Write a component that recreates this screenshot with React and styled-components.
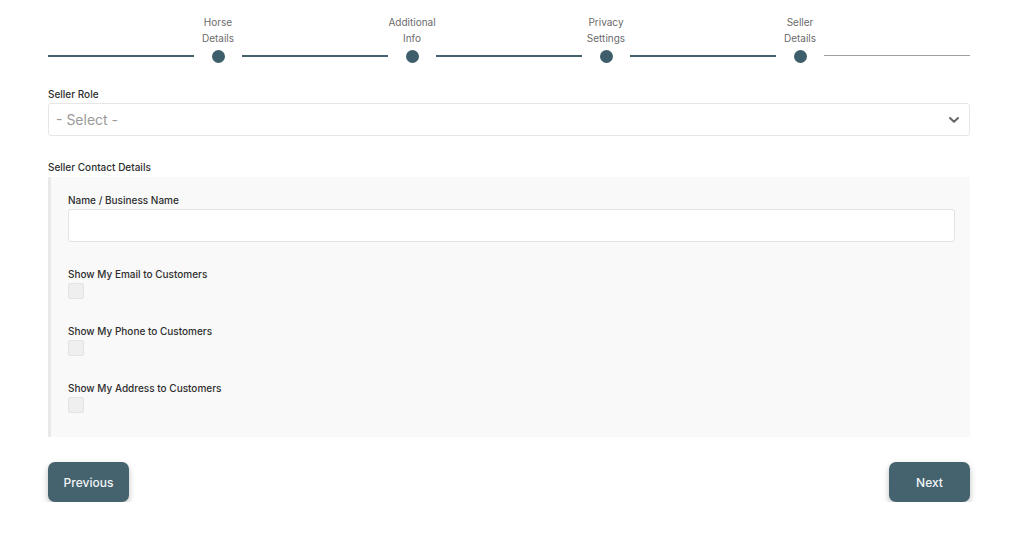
import React from "react";
import styled, { createGlobalStyle } from "styled-components";

const Global = createGlobalStyle`
  html, body { margin: 0; padding: 0; background: #fff; }
  body { font-family: Inter, "Noto Sans", "Liberation Sans", sans-serif; color: #333; }
  * { box-sizing: border-box; }
`;

const Page = styled.div`
  width: 922px;
  margin-left: 48px;
  display: flex;
  flex-direction: column;
`;

const Stepper = styled.div`
  display: flex;
  align-items: flex-end;
  height: 63px;
`;

const Step = styled.div`
  display: flex;
  align-items: flex-end;
  width: 194px;
`;

const Line = styled.div`
  flex: 1;
  height: ${(p) => (p.$done ? 2 : 1)}px;
  background: ${(p) => (p.$done ? "#46626e" : "#9aa0a3")};
  margin-bottom: ${(p) => (p.$done ? 6 : 7)}px;
`;

const DotCol = styled.div`
  width: 48px;
  display: flex;
  flex-direction: column;
  align-items: center;
`;

const StepLabel = styled.div`
  font-size: 10px;
  line-height: 16px;
  color: #6b6b6b;
  text-align: center;
  white-space: nowrap;
  margin-bottom: 4px;
`;

const Dot = styled.div`
  width: 13px;
  height: 13px;
  border-radius: 50%;
  background: #3d5e6a;
`;

const Tail = styled.div`
  flex: 1;
  display: flex;
  align-items: flex-end;
`;

const FieldLabel = styled.div`
  font-size: 10px;
  font-weight: 500;
  color: #2e2e2e;
  line-height: 12px;
  margin-top: ${(p) => p.$mt || 0}px;
  margin-bottom: ${(p) => p.$mb || 3}px;
`;

const SelectBox = styled.div`
  height: 33px;
  border: 1px solid #e6e6e6;
  border-radius: 3px;
  background: #fff;
  display: flex;
  align-items: center;
  justify-content: space-between;
  padding: 0 9px 0 7px;
  font-size: 14px;
  color: #9a9a9a;
`;

const Panel = styled.div`
  background: #f9f9f9;
  border-left: 3px solid #e9e9e9;
  padding: 17px 15px 24px 17px;
  display: flex;
  flex-direction: column;
`;

const TextInput = styled.div`
  height: 33px;
  background: #fff;
  border: 1px solid #e3e3e3;
  border-radius: 3px;
`;

const Check = styled.div`
  width: 16px;
  height: 16px;
  border: 1px solid #e3e3e3;
  background: #efefef;
  border-radius: 2px;
`;

const Group = styled.div`
  margin-top: ${(p) => p.$mt}px;
`;

const Footer = styled.div`
  display: flex;
  justify-content: space-between;
  margin-top: 25px;
`;

const Button = styled.button`
  width: 81px;
  height: 40px;
  border: none;
  border-radius: 7px;
  background: #44636f;
  color: #f2f5f6;
  font-family: Inter, "Noto Sans", sans-serif;
  font-size: 12px;
  font-weight: 500;
  box-shadow: 0 3px 6px rgba(0, 0, 0, 0.25);
  cursor: pointer;
`;

const steps = [
  ["Horse", "Details"],
  ["Additional", "Info"],
  ["Privacy", "Settings"],
  ["Seller", "Details"],
];

export default function App() {
  return (
    <>
      <Global />
      <Page>
        <Stepper>
          {steps.map((s) => (
            <Step key={s.join()}>
              <Line $done />
              <DotCol>
                <StepLabel>
                  {s[0]}
                  <br />
                  {s[1]}
                </StepLabel>
                <Dot />
              </DotCol>
            </Step>
          ))}
          <Tail>
            <Line />
          </Tail>
        </Stepper>

        <FieldLabel $mt={25}>Seller Role</FieldLabel>
        <SelectBox>
          <span>- Select -</span>
          <svg width="12" height="8" viewBox="0 0 12 8">
            <path d="M2 2 L6 5.8 L10 2" fill="none" stroke="#666" strokeWidth="2" strokeLinecap="round" strokeLinejoin="round" />
          </svg>
        </SelectBox>

        <FieldLabel $mt={25} $mb={4}>Seller Contact Details</FieldLabel>
        <Panel>
          <FieldLabel $mb={3}>Name / Business Name</FieldLabel>
          <TextInput />
          <Group $mt={26}>
            <FieldLabel $mb={3}>Show My Email to Customers</FieldLabel>
            <Check />
          </Group>
          <Group $mt={26}>
            <FieldLabel $mb={3}>Show My Phone to Customers</FieldLabel>
            <Check />
          </Group>
          <Group $mt={26}>
            <FieldLabel $mb={3}>Show My Address to Customers</FieldLabel>
            <Check />
          </Group>
        </Panel>

        <Footer>
          <Button>Previous</Button>
          <Button>Next</Button>
        </Footer>
      </Page>
    </>
  );
}
